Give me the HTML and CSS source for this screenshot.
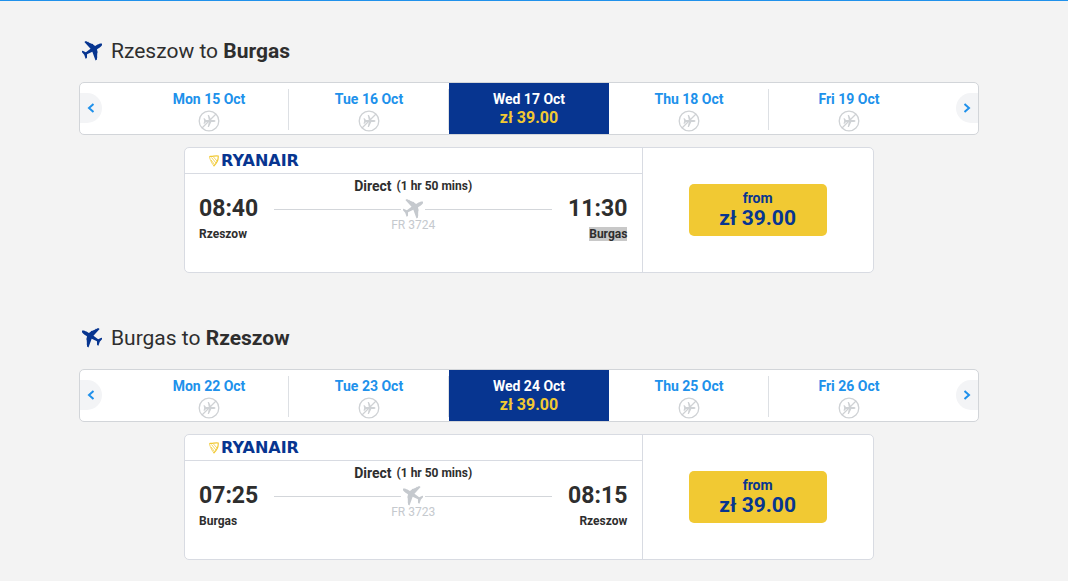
FILE: index.html
```html
<!DOCTYPE html>
<html lang="en">
<head>
	<meta charset="utf-8">
	<title>Select flights</title>
	<link rel="stylesheet" href="styles.css">
</head>
<body>
	<!-- shared icons -->
	<svg class="sprite" aria-hidden="true">
		<symbol id="plane" viewBox="-10 -10 20 20">
			<path transform="translate(0 -1) rotate(-31) scale(1.08)" d="M11 0C11 1 9 1.600 7 1.700H4.400L3.600 3.600V4.600H3L1 7.500V8.300H.4L-.6 10H-2.200L-.6 1.600L-6 1.100L-7.800 3.900H-9.300L-8.400 0L-9.300 -3.900H-7.800L-6 -1.100L-.6 -1.600L-2.200 -10H-.6L.4 -8.300H1V-7.500L3 -4.600H3.600V-3.600L4.400 -1.700H7C9 -1.600 11 -1 11 0z"/>
		</symbol>
		<symbol id="nofly" viewBox="0 0 22 22">
			<circle cx="11" cy="11" r="9.800" fill="none" stroke="currentColor" stroke-width="1.300"/>
			<path d="M4 18L18 4" stroke="currentColor" stroke-width="1.300"/>
			<path fill="currentColor" d="M17.500 11c0 .6-1 1-2.200 1h-2l-2.400 5H9.700l1.100-5H8l-1.400 1.800H5.500L6.200 11l-.7-2.800h1.100L8 10h2.800L9.700 5h1.200l2.400 5h2c1.200 0 2.200.4 2.200 1z"/>
		</symbol>
		<symbol id="chevron" viewBox="0 0 10 10">
			<path d="M2.500 1L7 5L2.500 9" fill="none" stroke="currentColor" stroke-width="2"/>
		</symbol>
		<symbol id="harp" viewBox="0 0 10 12">
			<path d="M.6 1.200C3.200 2.200 6 .2 9.200 1C9.600 5 7.500 8.500 4.600 11.200" fill="none" stroke="#f1c933" stroke-width="1.200"/>
			<path d="M.6 1.200C.4 4 2 5 2.500 7.500L5 11M2.500 2.500L7 8M4.500 2L8 6M2 5L5.500 9.500" stroke="#f1c933" stroke-width=".8" fill="none"/>
		</symbol>
	</svg>

	<main class="page">
		<section class="trip">
			<h2 class="trip-title">
				<svg class="title-icon"><use href="#plane"/></svg>
				<span>Rzeszow to <strong>Burgas</strong></span>
			</h2>
			<div class="dates">
				<button type="button" class="arrow prev" aria-label="Previous dates"><svg><use href="#chevron"/></svg></button>
				<button type="button" class="day">Mon 15 Oct <svg><use href="#nofly"/></svg></button>
				<button type="button" class="day">Tue 16 Oct <svg><use href="#nofly"/></svg></button>
				<button type="button" class="day selected">Wed 17 Oct <span class="day-price">zł 39.00</span></button>
				<button type="button" class="day">Thu 18 Oct <svg><use href="#nofly"/></svg></button>
				<button type="button" class="day">Fri 19 Oct <svg><use href="#nofly"/></svg></button>
				<button type="button" class="arrow next" aria-label="Next dates"><svg><use href="#chevron"/></svg></button>
			</div>
			<div class="flight">
				<div class="info">
					<div class="carrier"><svg><use href="#harp"/></svg>RYANAIR</div>
					<div class="route">
						<div class="stop">
							<div class="time">08:40</div>
							<span class="city">Rzeszow</span>
						</div>
						<div class="leg">
							<div class="duration">Direct <small>(1 hr 50 mins)</small></div>
							<div class="track"><svg><use href="#plane"/></svg></div>
							<div class="number">FR 3724</div>
						</div>
						<div class="stop arrival">
							<div class="time">11:30</div>
							<span class="city marked">Burgas</span>
						</div>
					</div>
				</div>
				<div class="buy">
					<button type="button" class="price">from <span>zł 39.00</span></button>
				</div>
			</div>
		</section>

		<section class="trip return">
			<h2 class="trip-title">
				<svg class="title-icon"><use href="#plane"/></svg>
				<span>Burgas to <strong>Rzeszow</strong></span>
			</h2>
			<div class="dates">
				<button type="button" class="arrow prev" aria-label="Previous dates"><svg><use href="#chevron"/></svg></button>
				<button type="button" class="day">Mon 22 Oct <svg><use href="#nofly"/></svg></button>
				<button type="button" class="day">Tue 23 Oct <svg><use href="#nofly"/></svg></button>
				<button type="button" class="day selected">Wed 24 Oct <span class="day-price">zł 39.00</span></button>
				<button type="button" class="day">Thu 25 Oct <svg><use href="#nofly"/></svg></button>
				<button type="button" class="day">Fri 26 Oct <svg><use href="#nofly"/></svg></button>
				<button type="button" class="arrow next" aria-label="Next dates"><svg><use href="#chevron"/></svg></button>
			</div>
			<div class="flight">
				<div class="info">
					<div class="carrier"><svg><use href="#harp"/></svg>RYANAIR</div>
					<div class="route">
						<div class="stop">
							<div class="time">07:25</div>
							<span class="city">Burgas</span>
						</div>
						<div class="leg">
							<div class="duration">Direct <small>(1 hr 50 mins)</small></div>
							<div class="track"><svg><use href="#plane"/></svg></div>
							<div class="number">FR 3723</div>
						</div>
						<div class="stop arrival">
							<div class="time">08:15</div>
							<span class="city">Rzeszow</span>
						</div>
					</div>
				</div>
				<div class="buy">
					<button type="button" class="price">from <span>zł 39.00</span></button>
				</div>
			</div>
		</section>
	</main>
</body>
</html>
```

FILE: styles.css
```css
* {
	box-sizing: border-box;
}
body {
	margin: 0;
	padding-right: 10px;
	border-top: 1px solid #2091eb;
	background: #f3f3f3;
	color: #2e2e2e;
	font-family: Roboto, "Liberation Sans", sans-serif;
	font-size: 14px;
}
button {
	border: 0;
	padding: 0;
	font: inherit;
	cursor: pointer;
}
svg {
	display: block;
	fill: currentColor;
}
.sprite {
	display: none;
}

.page {
	max-width: 900px;
	margin: 0 auto;
	padding: 38px 0 21px;
}
.trip + .trip {
	margin-top: 53px;
}
.trip-title {
	display: flex;
	align-items: center;
	gap: 9px;
	margin: 0 0 19px;
	padding-left: 3px;
	font-size: 21px;
	line-height: 24px;
	font-weight: 400;
}
.title-icon {
	width: 20px;
	height: 20px;
	color: #073590;
}
.return .title-icon,
.return .track svg {
	transform: scaleX(-1);
}

/* date carousel */
.dates {
	display: flex;
	justify-content: space-between;
	height: 53px;
	border: 1px solid #d2d5d9;
	border-radius: 5px;
	background: #fff;
	overflow: hidden;
}
.day {
	display: flex;
	flex: 0 1 160px;
	flex-direction: column;
	align-items: center;
	padding-top: 8px;
	background: linear-gradient(#dde0e4, #dde0e4) right 6px / 1px 41px no-repeat;
	color: #2091eb;
	font-weight: 700;
	line-height: 16px;
}
.day svg {
	width: 22px;
	height: 22px;
	margin-top: 3px;
	color: #cfd2d5;
}
.day.selected {
	background: #073590;
	color: #fff;
}
.day:nth-last-child(2) {
	background: none;
}
.day-price {
	color: #f1c933;
	font-size: 16px;
	line-height: 22px;
}
.arrow {
	display: flex;
	align-items: center;
	justify-content: center;
	align-self: center;
	width: 22px;
	height: 30px;
	margin-bottom: 2px;
	background: #f3f4f6;
	color: #2091eb;
}
.arrow svg {
	width: 10px;
	height: 10px;
}
.prev {
	margin-right: 27px;
	border-radius: 0 15px 15px 0;
}
.prev svg {
	transform: scaleX(-1);
}
.next {
	margin-left: 27px;
	border-radius: 15px 0 0 15px;
}

/* flight card */
.flight {
	display: flex;
	max-width: 690px;
	min-height: 126px;
	margin: 12px auto 0;
	border: 1px solid #d8dbe2;
	border-radius: 5px;
	background: #fff;
}
.info {
	flex: 2;
	border-right: 1px solid #d8dbe2;
}
.carrier {
	display: flex;
	align-items: center;
	gap: 2px;
	height: 26px;
	padding-left: 24px;
	border-bottom: 1px solid #d8dbe2;
	color: #073590;
	font: bold 16px "DejaVu Sans", sans-serif;
}
.carrier svg {
	width: 10px;
	height: 12px;
}
.route {
	display: flex;
	gap: 16px;
	padding: 3px 15px 0 14px;
}
.stop {
	padding-top: 18px;
	font-weight: 700;
}
.arrival {
	text-align: right;
}
.time {
	font-size: 23px;
	line-height: 28px;
	margin-bottom: 2px;
}
.city {
	display: inline-block;
	font-size: 12px;
	line-height: 14px;
}
.marked {
	background: #c8c8c8;
}
.leg {
	flex: 1;
	text-align: center;
}
.duration {
	display: flex;
	align-items: center;
	justify-content: center;
	gap: 5px;
	font-weight: 700;
	line-height: 18px;
}
.duration small {
	font-size: 12px;
}
.track {
	display: flex;
	align-items: center;
	gap: 2px;
	height: 24px;
	padding-top: 3px;
	color: #c5c9ce;
}
.track::before,
.track::after {
	content: "";
	flex: 1;
	height: 1px;
	margin-top: 2px;
	background: #d3d6da;
}
.track svg {
	width: 20px;
	height: 20px;
}
.number {
	color: #c5c9ce;
	font-size: 12px;
	line-height: 12px;
}
.buy {
	display: flex;
	flex: 1;
	align-items: center;
	justify-content: center;
	padding-right: 1px;
}
.price {
	width: 138px;
	height: 52px;
	border-radius: 5px;
	background: #f1c933;
	color: #073590;
	font-weight: 700;
	line-height: 16px;
}
.price span {
	display: block;
	font-size: 21px;
	line-height: 24px;
}
```
